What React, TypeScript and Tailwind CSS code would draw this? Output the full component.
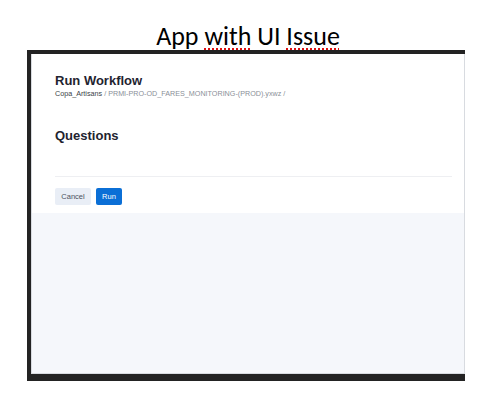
import React from "react";

const RunWorkflowPanel: React.FC = () => {
  return (
    <div className="flex flex-1 flex-col border border-[#d8dbe0] border-t-0 bg-[#f5f7fb]">
      <div className="bg-white pl-[23px] pr-[12px] pt-[20px] pb-[8px]">
        <h1 className="text-[13px] leading-[14px] font-bold text-[#1f2430]">Run Workflow</h1>
        <p className="mt-[1px] text-[7.2px] leading-[9px] text-[#8a8f98]">
          <span className="text-[#3a3f48]">Copa_Artisans</span> / PRMI-PRO-OD_FARES_MONITORING-(PROD).yxwz /
        </p>
        <h2 className="mt-[31px] text-[13px] leading-[14px] font-bold text-[#1f2430]">Questions</h2>
        <div className="mt-[33px] h-px bg-[#eeeff2]" />
        <div className="mt-[11px] flex gap-[5px]">
          <button className="h-[17px] w-[36px] rounded-[2px] bg-[#e9eef6] text-[7.5px] text-[#4b5160]">Cancel</button>
          <button className="h-[17px] w-[26px] rounded-[2px] bg-[#0b6fd6] text-[7.5px] text-white">Run</button>
        </div>
      </div>
    </div>
  );
};

export default function App() {
  return (
    <div className="h-[394px] w-[494px] bg-white font-['Liberation_Sans',Arial,sans-serif]">
      <div className="flex h-[50px] items-end justify-center pb-0">
        <span className="pl-[2px] font-['Carlito','Liberation_Sans',sans-serif] text-[26px] leading-[28px] text-black">
          App{" "}
          <span className="underline decoration-dotted decoration-[#d11] decoration-2 underline-offset-[3px]">with</span>{" "}
          UI{" "}
          <span className="underline decoration-dotted decoration-[#d11] decoration-2 underline-offset-[3px]">Issue</span>
        </span>
      </div>
      <div className="ml-[27px] flex h-[331px] w-[438px] flex-col border-t-4 border-l-4 border-b-[7px] border-[#232323]">
        <RunWorkflowPanel />
      </div>
    </div>
  );
}
